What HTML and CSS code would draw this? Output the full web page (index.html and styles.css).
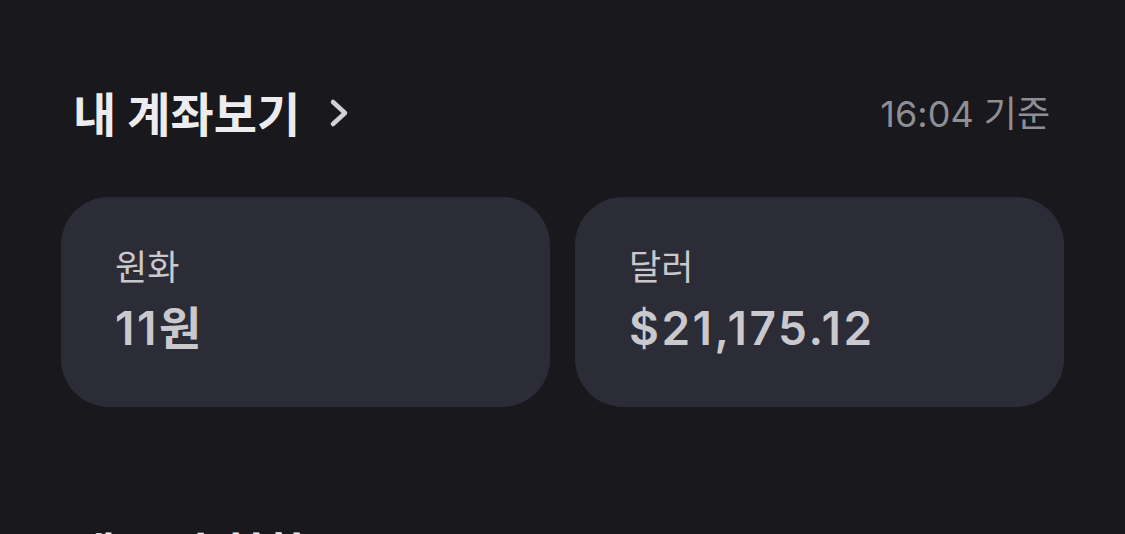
FILE: index.html
```html
<!DOCTYPE html>
<html lang="ko">
<head>
  <meta charset="UTF-8">
  <title>내 계좌보기</title>
  <link rel="stylesheet" href="styles.css">
</head>
<body>
  <div class="page">
    <div class="header">
      <a class="title" href="#">
        <span>내 계좌보기</span>
        <svg class="chevron" width="22" height="30" viewBox="0 0 22 30">
          <path d="M5 4 L17 15 L5 26" fill="none" stroke="#d2d2d6" stroke-width="4.5" stroke-linecap="round" stroke-linejoin="round"/>
        </svg>
      </a>
      <span class="time">16:04 기준</span>
    </div>

    <div class="cards">
      <div class="card">
        <div class="label">원화</div>
        <div class="value">11원</div>
      </div>
      <div class="card">
        <div class="label">달러</div>
        <div class="value">$21,175.12</div>
      </div>
    </div>

    <div class="section-title">내 투자 현황</div>
  </div>
</body>
</html>
```

FILE: styles.css
```css
html, body {
  margin: 0;
  background: #18181d;
  height: 100%;
  overflow: hidden;
}
body {
  font-family: Inter, "Noto Sans CJK KR", sans-serif;
}
.page {
  padding: 0 61px;
}
.header {
  display: flex;
  justify-content: space-between;
  align-items: center;
  padding: 82px 14px 0 12px;
  height: 58px;
}
.title {
  display: flex;
  align-items: center;
  gap: 28px;
  color: #ececf0;
  font-size: 47px;
  font-weight: 700;
  text-decoration: none;
}
.chevron {
  margin-top: 4px;
}
.time {
  color: #8e8e95;
  font-size: 36px;
}
.cards {
  display: grid;
  grid-template-columns: 1fr 1fr;
  gap: 25px;
  margin-top: 57px;
}
.card {
  background: #2c2c36;
  border-radius: 48px;
  height: 210px;
  box-sizing: border-box;
  padding: 46px 54px 0;
}
.label {
  color: #c8c8cd;
  font-size: 35px;
  line-height: 48px;
}
.value {
  color: #c8c8cd;
  font-size: 46px;
  font-weight: 600;
  line-height: 60px;
  margin-top: 7px;
  letter-spacing: 2.5px;
}
.section-title {
  color: #ececf0;
  font-size: 46px;
  font-weight: 700;
  margin-top: 111px;
  padding-left: 12px;
}
```
